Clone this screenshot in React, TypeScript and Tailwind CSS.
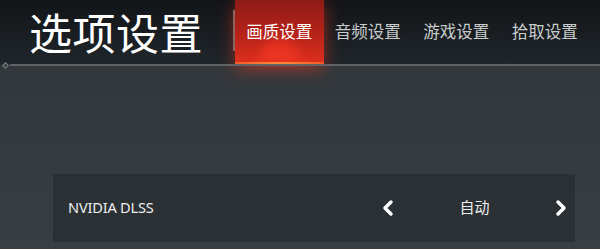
import { ChevronLeft, ChevronRight } from 'lucide-react';

const tabs = ['画质设置', '音频设置', '游戏设置', '拾取设置'];

const App = () => {
  return (
    <div className="w-[600px] h-[249px] overflow-hidden flex flex-col bg-gradient-to-b from-[#2f3539] to-[#383e42] font-['Noto_Sans_CJK_SC','Noto_Sans',sans-serif]">
      {/* Header */}
      <header className="relative h-[65px] flex items-stretch bg-gradient-to-b from-[#121518] to-[#20262b]">
        <h1 className="w-[233px] pl-[29px] flex items-center text-[43px] leading-none text-white tracking-[0.5px] pb-[2px]">
          选项设置
        </h1>
        <div className="w-[2px] h-[41px] mt-[10px] bg-[#6b6f72]" />
        <nav className="flex items-stretch">
          {tabs.map((t, i) => (
            <div
              key={t}
              className={`relative w-[88.5px] flex items-center justify-center text-[16.5px] pb-[2px] ${
                i === 0 ? 'text-white' : 'text-[#c9cccd]'
              }`}
            >
              {i === 0 && (
                <>
                  <div className="absolute inset-0 bg-gradient-to-b from-[#8e1c16] via-[#b42219] to-[#e0301f] shadow-[0_4px_16px_rgba(255,60,30,0.5)]" />
                  <div className="absolute left-[24px] right-[24px] bottom-[2px] h-[24px] rounded-t-full bg-[#ff3a25]/55 blur-[5px]" />
                  <div className="absolute left-0 right-0 bottom-0 h-[3px] bg-gradient-to-r from-[#f05a2a] via-[#ff8a3a] to-[#f05a2a]" />
                </>
              )}
              <span className="relative">{t}</span>
            </div>
          ))}
        </nav>
        {/* bottom rule with diamond */}
        <div className="absolute left-[10px] right-0 bottom-[-1px] h-[2px] bg-[#5f6366]" />
        <div className="absolute left-[3px] bottom-[-3px] w-[5px] h-[5px] rotate-45 border border-[#7a7e80] bg-[#3a3f42]" />
      </header>

      {/* Body */}
      <main className="flex-1 pt-[109px] pl-[53px] pr-[25px]">
        <div className="h-[68px] bg-[#2b3034] flex items-center pl-[15px] pr-[2px]">
          <span className="flex-1 text-[14.6px] text-[#eceeef] font-['Noto_Sans',sans-serif] tracking-[-0.2px] pb-[1px]">
            NVIDIA DLSS
          </span>
          <div className="flex items-center w-[197px] justify-between">
            <ChevronLeft className="w-[24px] h-[24px] text-white" strokeWidth={3.5} />
            <span className="text-[15px] text-[#eceeef] pb-[2px]">自动</span>
            <ChevronRight className="w-[24px] h-[24px] text-white" strokeWidth={3.5} />
          </div>
        </div>
      </main>
    </div>
  );
};

export default App;
